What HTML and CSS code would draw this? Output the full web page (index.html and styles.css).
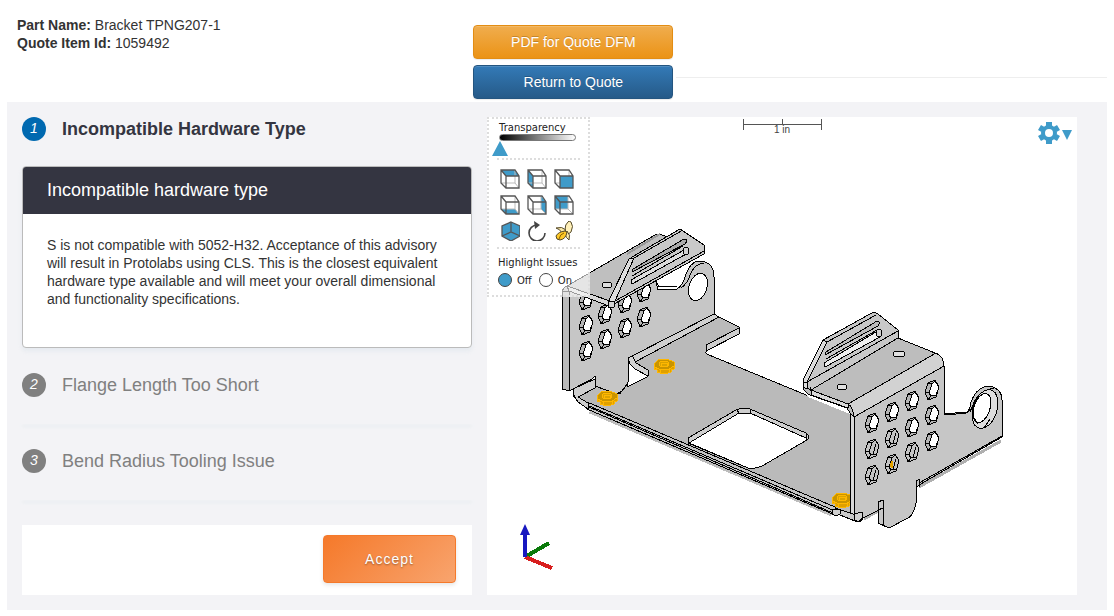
FILE: index.html
```html
<!DOCTYPE html>
<html lang="en">

<head>
  <meta charset="UTF-8">
  <meta name="viewport" content="width=device-width, initial-scale=1.0">
  <title>Bracket TPNG207-1</title>
  <link rel="stylesheet" href="styles.css">
</head>

<body>
  <header class="page-header">
    <div class="part-info">
      <div><strong>Part Name:</strong> Bracket TPNG207-1</div>
      <div><strong>Quote Item Id:</strong> 1059492</div>
    </div>
    <div class="header-actions">
      <div class="action-buttons">
        <button type="button" class="btn btn-warning">PDF for Quote DFM</button>
        <button type="button" class="btn btn-primary">Return to Quote</button>
      </div>
      <hr class="header-rule">
    </div>
  </header>

  <main class="panel">
    <section class="advisories">
      <div class="step active">
        <h2 class="step-title"><i class="step-number">1</i>Incompatible Hardware Type</h2>
        <div class="card">
          <h3 class="card-title">Incompatible hardware type</h3>
          <p class="card-text">S is not compatible with 5052-H32. Acceptance of this advisory will result in Protolabs using CLS. This is the closest equivalent hardware type available and will meet your overall dimensional and functionality specifications.</p>
        </div>
      </div>
      <div class="step">
        <h2 class="step-title"><i class="step-number">2</i>Flange Length Too Short</h2>
        <div class="step-line"></div>
      </div>
      <div class="step">
        <h2 class="step-title"><i class="step-number">3</i>Bend Radius Tooling Issue</h2>
        <div class="step-line"></div>
      </div>
      <div class="accept-bar">
        <button type="button" class="btn-accept">Accept</button>
      </div>
    </section>

    <section class="viewer">
      <svg class="model" viewBox="487 117 590 478" preserveAspectRatio="xMinYMin meet">
        <defs>
          <g id="hex">
            <path d="M-7 2 L-4 -7 L3 -10 L7 -3 L4 7 L-4 10 Z" fill="#b5b5b5" stroke="#000" />
            <path d="M-3 3 L0 -6 L3 -9 L7 -3 L4 5 L-1 6 Z" fill="#fff" stroke="#000" />
            <path d="M-7 2 L-3 3 M-1 6 L-4 10 M-4 -7 L0 -6" fill="none" stroke="#000" />
          </g>
          <g id="hexdark">
            <path d="M-7 2 L-4 -7 L3 -10 L7 -3 L4 7 L-4 10 Z" fill="#c4c4c4" stroke="#000" />
            <path d="M-7 2 L-3 3 L0 -6 L-4 -7 M0 -6 L3 -9 M-3 3 L-1 6 L4 5 M-1 6 L-4 10 M4 -5 L1 5" fill="none" stroke="#000" />
          </g>
          <g id="insert">
            <path d="M-10 -2 L-10 3 L-7 4 L-7 6 Q0 9 7 6 L7 4 L10 3 L10 -2 Z" fill="#dfa000" stroke="#ffb700" />
            <path d="M-10 -2 L-6 -6 L3 -7 L10 -4 L10 0 L5 3 L-5 3 L-10 1 Z" fill="#c99400" stroke="#ffb700" />
            <ellipse cx="0" cy="-2" rx="5" ry="3" fill="#dba300" stroke="#ffb700" />
            <path d="M-3 -3 L3 -3 L3 0 L-2 0 Z M-4 3 V7 M5 3 V7" fill="none" stroke="#ffb700" />
          </g>
        </defs>

        <!-- scale -->
        <path d="M743.5 119 V130 M821.5 119 V130 M782.5 119 V124 M743 124.5 H822" stroke="#555" fill="none" />
        <text class="scale-text" x="782" y="133" text-anchor="middle">1 in</text>

        <g stroke="#000" stroke-width="1" stroke-linejoin="round" shape-rendering="crispEdges">
          <!-- floor -->
          <path d="M590 411 L832 514" stroke="#bdbdbd" stroke-width="5" />
          <path d="M573 388 L593 380 L620 394 L628 357 L633 355 L717 316 L739 327 V334 L707 350 Q704 353 709 355 L850 413 V516 L835 514 L588 409 L578 402 L573 395 Z" fill="#bababa" />
          <path d="M631 356 L714 314 L719 317 L635 362 Z" fill="#d0d0d0" />
          <path d="M739 328 L706 345 V351 L739 334 Z" fill="#cfcfcf" />
          <path d="M587 402 L835 507 V515 L587 409 Z" fill="#c4c4c4" />
          <path d="M587 405 L835 511 M589 407 L833 513" fill="none" />
          <path d="M573 389 L595 379 V388 L578 397 L588 403 V409 L578 402 Q573 396 573 389 Z" fill="#cfcfcf" />

          <!-- relief at the corner -->
          <path d="M628 357 L634 366 L647 374 V377 L627 387 Z" fill="#fff" />
          <path d="M628 357 L632 355 L636 363 L648 370 V376 L635 369 L630 364 Z" fill="#d4d4d4" />

          <!-- floor cutout -->
          <path d="M688 438 L736 410 Q740 408 750 409 L806 433 Q811 436 807 440 L762 466 Q757 469 748 468 L688 443 Z" fill="#cecece" />
          <path d="M689 443 L739 413 H750 L806 438 L807 440 L762 466 Q757 469 748 468 Z" fill="#fff" />
          <path d="M737 410 L739 413 M750 409 V413 M806 433 V438" />

          <!-- left wall -->
          <path d="M569 291 L609 305 L656 281 L658 290 L677 289 Q683 285 685 277 Q690 261 700 261 Q714 262 714 277 V314 L632 356 L628 358 V382 Q621 396 614 393 L595 386 V376 L592 379 L569 391 Z" fill="#c6c6c6" />
          <path d="M562.5 289 L569 291 V391 L562.5 389 Z" fill="#b9b9b9" />
          <path d="M681 288 Q688 283 690 275 Q694 264 704 263 M656 281 L659 287 L677 286" fill="none" />
          <ellipse cx="698" cy="287" rx="9" ry="14" transform="rotate(18 698 287)" fill="#fff" />
          <use href="#hex" x="586" y="300" />
          <use href="#hex" x="586" y="325" />
          <use href="#hex" x="586" y="351" />
          <use href="#hex" x="605" y="314" />
          <use href="#hex" x="605" y="339" />
          <use href="#hex" x="625" y="303" />
          <use href="#hex" x="625" y="328" />
          <use href="#hex" x="644" y="292" />
          <use href="#hex" x="644" y="317" />

          <!-- left flange and slotted tab -->
          <path d="M562.5 292 Q563 287 567 286 L655 235 Q658 233 665 236 L690 250 L616 303 L609 306 L569 291 Z" fill="#bfbfbf" />
          <path d="M567 286 L610 301 L609 306 L569 291 Z" fill="#d8d8d8" />
          <path d="M660 234 L627 254" stroke="#999" stroke-width="2" />
          <ellipse cx="607" cy="285" rx="5" ry="3" fill="#ddd" />
          <path d="M609 300 L629 260 L632 257 L680 229 L704 245 V254 L614 304 L609 306 Z" fill="#c9c9c9" />
          <path d="M609 300 L629 259 L634 258 L615 301 L614 304 L609 304 Z" fill="#dedede" />
          <path d="M634 258 L683 230 M615 301 L704 251" fill="none" />
          <path d="M633 269 L684 239 Q689 239 685 244 L632 272 Z" fill="#aaa" />
          <path d="M632 276 L683 246" fill="none" />
          <path d="M631 280 L684 250 Q690 248 688 253 L632 284 Z" fill="#ddd" />
          <ellipse cx="686" cy="251" rx="3" ry="4" fill="#d0d0d0" />
          <rect x="608" y="301" width="6" height="6" fill="#d0d0d0" />

          <!-- inserts -->
          <use href="#insert" x="664" y="366" />
          <use href="#insert" x="607" y="398" />
          <use href="#insert" x="842" y="500" />

          <!-- right wall -->
          <path d="M864 519 L878 511 M919 487 L1001 441" stroke="#b0b0b0" stroke-width="3" />
          <path d="M854 417 L944 366 V414 L967 412 Q970 410 971 402 Q977 386 990 386 Q1002 389 1002 400 V437 L919 485 L916 488 V503 Q913 516 908 518 L889 528 L878 523 V502 L883 500 V508 L863 518 L854 518 Z" fill="#c6c6c6" />
          <path d="M850 413 L854 417 V517 L850 514 Z" fill="#d8d8d8" />
          <path d="M835 508 L850 513 L862 517 V512 L863 518 Q860 524 855 521 L840 515 Z" fill="#c9c9c9" />
          <path d="M832 509 H840 V514 L836 516 L832 514 Z M854 514 L862 512 V518 L859 522 L855 520 Z" fill="#d0d0d0" />
          <path d="M883 500 V525 L889 528 M878 510 L883 508 M916 482 L919 479 V487 M916 480 V490 M919 483 L1002 436 M944 414 L947 415 L966 413 Q972 411 974 402 Q980 390 994 388" fill="none" />
          <ellipse cx="985" cy="409" rx="12" ry="20" transform="rotate(18 985 409)" fill="#dedede" />
          <ellipse cx="982" cy="408" rx="8" ry="15" transform="rotate(18 982 408)" fill="#fff" />
          <path d="M974 418 L978 424 M990 419 L984 428 M974 404 L970 412" />

          <!-- right flange -->
          <path d="M807 394 L850 410 V414 L808 397 Z" fill="#fff" stroke="none" />
          <path d="M803 387 Q804 392 810 395 L847 408 L850 413 L854 417 L944 366 Q944 357 935 353 L898 338 L808 378 Z" fill="#bdbdbd" />
          <path d="M848 404 L936 353 Q944 357 944 366 L854 417 Q853 407 848 404 Z" fill="#d2d2d2" />
          <path d="M811 390 L848 404 V408 L811 395 Z" fill="#d8d8d8" />
          <path d="M803 380 L823 340 L870 314 Q874 311 878 314 L898 330 V338 L811 390 L803 386 Z" fill="#c8c8c8" />
          <path d="M803 380 L823 340 L827 342 L807 382 V389 L803 387 Z" fill="#dcdcdc" />
          <path d="M827 342 L876 315 M807 382 L898 331 M803 382 L807 383 M810 387 L812 394" fill="none" />
          <path d="M826 352 L877 321 Q881 322 878 326 L825 355 Z" fill="#bbb" />
          <path d="M826 359 L877 330" fill="none" />
          <path d="M824 363 L876 332 Q884 328 880 337 L825 367 Z" fill="#eee" />
          <ellipse cx="879" cy="333" rx="3" ry="4" fill="#d0d0d0" />
          <ellipse cx="899" cy="354" rx="6" ry="3" fill="#e0e0e0" />
          <ellipse cx="842" cy="387" rx="5" ry="3" fill="#e0e0e0" />

          <use href="#hex" x="872" y="423" />
          <use href="#hex" x="892" y="412" />
          <use href="#hex" x="912" y="401" />
          <use href="#hex" x="932" y="390" />
          <use href="#hexdark" x="872" y="449" />
          <use href="#hexdark" x="892" y="438" />
          <use href="#hex" x="912" y="427" />
          <use href="#hex" x="932" y="415" />
          <use href="#hexdark" x="872" y="475" />
          <use href="#hexdark" x="892" y="464" />
          <use href="#hexdark" x="912" y="452" />
          <use href="#hex" x="932" y="441" />
          <path d="M892 461 L890 465 L892 468 Z" fill="#e5a300" stroke="#e5a300" />
        </g>

        <!-- axes -->
        <g stroke-width="4" fill="none" shape-rendering="crispEdges">
          <path d="M525 557 L549 543" stroke="#0a7a0a" />
          <path d="M525 557 L552 568" stroke="#d81e1e" />
          <path d="M525 557 V533" stroke="#1818c0" />
        </g>
        <path d="M525 524 L530 535 H520 Z" fill="#1818c0" />
      </svg>

      <div class="toolbox">
        <label class="tool-label" for="transparency">Transparency</label>
        <input type="range" id="transparency" class="transparency" min="0" max="100" value="0">
        <div class="tool-grid">
          <button type="button" class="tool" aria-label="Top">
            <svg viewBox="0 0 20 20">
              <path class="face" d="M1 1 H15 L19 7 H6 Z" />
              <path class="hidden-edge" d="M15 1 V14 H1 M15 14 L19 19" />
              <path class="edge" d="M1 1 H15 L19 7 V19 H6 L1 14 Z M1 1 L6 7 H19 M6 7 V19" />
            </svg>
          </button>
          <button type="button" class="tool" aria-label="Left">
            <svg viewBox="0 0 20 20">
              <path class="face" d="M1 1 L6 7 V19 L1 14 Z" />
              <path class="hidden-edge" d="M15 1 V14 H1 M15 14 L19 19" />
              <path class="edge" d="M1 1 H15 L19 7 V19 H6 L1 14 Z M1 1 L6 7 H19 M6 7 V19" />
            </svg>
          </button>
          <button type="button" class="tool" aria-label="Front">
            <svg viewBox="0 0 20 20">
              <path class="hidden-edge" d="M15 1 V14 H1 M15 14 L19 19" />
              <path class="face" d="M6 7 H19 V19 H6 Z" />
              <path class="edge" d="M1 1 H15 L19 7 V19 H6 L1 14 Z M1 1 L6 7 H19 M6 7 V19" />
            </svg>
          </button>
          <button type="button" class="tool" aria-label="Bottom">
            <svg viewBox="0 0 20 20">
              <path class="face" d="M1 14 H15 L19 19 H6 Z" />
              <path class="hidden-edge" d="M15 1 V14 H1 M15 14 L19 19" />
              <path class="edge" d="M1 1 H15 L19 7 V19 H6 L1 14 Z M1 1 L6 7 H19 M6 7 V19" />
            </svg>
          </button>
          <button type="button" class="tool" aria-label="Right">
            <svg viewBox="0 0 20 20">
              <path class="face" d="M14 1 L19 7 V19 L14 14 Z" />
              <path class="hidden-edge" d="M14 1 V14 H1 M14 14 L19 19" />
              <path class="edge" d="M1 1 H15 L19 7 V19 H6 L1 14 Z M1 1 L6 7 H19 M6 7 V19" />
            </svg>
          </button>
          <button type="button" class="tool" aria-label="Back">
            <svg viewBox="0 0 20 20">
              <path class="face" d="M1 1 H14 V14 H1 Z" />
              <path class="hidden-edge" d="M14 1 V14 H1 M14 14 L19 19" />
              <path class="edge" d="M1 1 H15 L19 7 V19 H6 L1 14 Z M1 1 L6 7 H19 M6 7 V19" />
            </svg>
          </button>
          <button type="button" class="tool" aria-label="Isometric">
            <svg viewBox="0 0 20 20">
              <path class="face" d="M11 1 L20 5 V15 L11 20 L2 15 V5 Z" />
              <path class="edge" d="M11 1 L20 5 V15 L11 20 L2 15 V5 Z M11 1 V11 M2 15 L11 11 L20 15" />
            </svg>
          </button>
          <button type="button" class="tool" aria-label="Rotate">
            <svg viewBox="0 0 20 20">
              <path d="M18 12 A8 8 0 1 1 10 4" fill="none" stroke="#444" stroke-width="1.600" />
              <path d="M7 0 L13 4 L8 8 Z" fill="#444" />
            </svg>
          </button>
          <button type="button" class="tool" aria-label="Banana for scale">
            <svg viewBox="0 0 20 20">
              <path d="M11 9 Q11 3 14 1 L15 0 L17 1 Q20 5 17 11 L13 14 Z" fill="#fff0b8" stroke="#554a2a" />
              <path d="M12 9 Q8 5 2 7 Q6 8 8 12 Z M13 10 Q17 14 15 19 Q12 17 11 13 Z" fill="#fbe9a8" stroke="#554a2a" />
              <path d="M11 10 Q4 11 2 15 Q2 19 6 19 Q12 18 13 11 Z" fill="#ffc928" stroke="#554a2a" />
              <path d="M10 12 Q6 13 5 18" fill="none" stroke="#8a6200" />
            </svg>
          </button>
        </div>
        <fieldset class="highlight">
          <legend class="tool-label">Highlight Issues</legend>
          <div class="radios">
            <input type="radio" name="highlight" id="highlight-off" checked>
            <label for="highlight-off">Off</label>
            <input type="radio" name="highlight" id="highlight-on">
            <label for="highlight-on">On</label>
          </div>
        </fieldset>
      </div>

      <button type="button" class="settings" aria-label="Settings">
        <svg width="34" height="22" viewBox="0 0 34 22">
          <g stroke="#3f9bc9" fill="none">
            <circle cx="11" cy="11" r="6" stroke-width="4" />
            <path d="M11 0 V4 M11 18 V22 M1.500 5.500 L5 7.500 M17 14.500 L20.500 16.500 M1.500 16.500 L5 14.500 M17 7.500 L20.500 5.500" stroke-width="6" />
          </g>
          <path d="M24 8 H34 L29 18 Z" />
        </svg>
      </button>
    </section>
  </main>
</body>

</html>
```
FILE: styles.css
```css
* {
  box-sizing: border-box;
}

body {
  margin: 0;
  padding: 0 7px;
  background-color: #fff;
  color: #333;
  font-family: "Liberation Sans", Arial, sans-serif;
  font-size: 14px;
  line-height: 18px;
}

h2,
h3,
p {
  margin: 0;
}

button {
  font-family: inherit;
  cursor: pointer;
}

/* header */

.page-header {
  display: grid;
  grid-template-columns: 5fr 7fr;
}

.part-info {
  padding: 16px 10px 0;
}

.header-actions {
  display: flex;
  padding: 25px 0 3px 8px;
}

.action-buttons {
  display: flex;
  flex-direction: column;
  gap: 6px;
  width: 200px;
}

.header-rule {
  flex: 1;
  margin: 52px 0 0 3px;
  border: 0;
  border-top: 1px solid #eee;
}

.btn {
  height: 34px;
  border: 1px solid;
  border-radius: 4px;
  color: #fff;
  font-size: 14px;
  text-shadow: 0 -1px 0 rgba(0, 0, 0, 0.2);
  box-shadow: inset 0 1px 0 rgba(255, 255, 255, 0.15), 0 1px 1px rgba(0, 0, 0, 0.08);
}

.btn-warning {
  background-image: linear-gradient(#f0ad4e, #eb9316);
  border-color: #e38d13;
}

.btn-primary {
  background-image: linear-gradient(#337ab7, #265a88);
  border-color: #245580;
}

/* main panel */

.panel {
  display: grid;
  grid-template-columns: minmax(0, 450px) 1fr;
  gap: 15px;
  padding: 15px 30px 15px 15px;
  background-color: #f3f3f6;
}

.step {
  margin-bottom: 25px;
}

.step-title {
  display: flex;
  align-items: center;
  gap: 16px;
  margin-bottom: 25px;
  color: #808080;
  font-size: 18px;
  font-weight: normal;
  line-height: 24px;
}

.step-number {
  width: 24px;
  height: 24px;
  border-radius: 50%;
  background-color: #808080;
  color: #fff;
  font-size: 14px;
  line-height: 22px;
  text-align: center;
}

.active .step-title {
  color: #343541;
  font-weight: bold;
}

.active .step-number {
  background-color: #0069b0;
  font-weight: normal;
}

.step-line {
  height: 2px;
  box-shadow: 0 3px 3px rgba(200, 220, 225, 0.2);
}

.card {
  min-height: 182px;
  border: 1px solid #bbb;
  border-radius: 4px;
  background-color: #fff;
  box-shadow: 0 3px 4px rgba(200, 215, 225, 0.3);
  overflow: hidden;
}

.card-title {
  padding: 0 24px;
  background-color: #343541;
  color: #fff;
  font-size: 18px;
  font-weight: normal;
  line-height: 47px;
}

.card-text {
  padding: 22px 24px;
}

.accept-bar {
  display: flex;
  justify-content: flex-end;
  padding: 10px 16px 12px;
  background-color: #fff;
}

.btn-accept {
  width: 133px;
  height: 48px;
  border: 1px solid #f5792a;
  border-radius: 4px;
  background-image: linear-gradient(135deg, #f5792a, #f8a46e);
  color: #fff;
  font-size: 14px;
  letter-spacing: 1px;
  text-shadow: 0 1px 2px rgba(0, 0, 0, 0.4);
  box-shadow: 0 2px 4px rgba(0, 0, 0, 0.1);
}

/* 3d viewer */

.viewer {
  position: relative;
  background-color: #fff;
}

.model {
  display: block;
  width: 100%;
}

.scale-text {
  fill: #444;
  font-family: "Liberation Sans", Arial, sans-serif;
  font-size: 10px;
}

.toolbox {
  position: absolute;
  top: 0;
  left: 0;
  width: 103px;
  padding: 3px 8px 8px;
  border: 2px dotted #ddd;
  background-color: rgba(255, 255, 255, 0.6);
  color: #222;
  font-family: "DejaVu Sans", Verdana, sans-serif;
  font-size: 10px;
  line-height: 12px;
}

.tool-label {
  display: block;
  padding: 0 0 0 2px;
}

.transparency {
  display: block;
  appearance: none;
  width: 77px;
  height: 7px;
  margin: 0 0 17px 2px;
  background: none;
}

.transparency::-webkit-slider-runnable-track {
  height: 7px;
  border: 1px solid #777;
  border-radius: 4px;
  background-image: linear-gradient(to right, #000, #fff);
}

.transparency::-webkit-slider-thumb {
  appearance: none;
  width: 16px;
  height: 15px;
  margin: 6px 0 0 -8px;
  background-color: #3f9bc9;
  clip-path: polygon(50% 0, 100% 100%, 0 100%);
}

.tool-grid {
  display: grid;
  grid-template-columns: repeat(3, 20px);
  gap: 6px 7px;
  padding: 9px 3px 6px;
  border-top: 2px dotted #ddd;
  border-bottom: 2px dotted #ddd;
}

.tool {
  height: 20px;
  padding: 0;
  border: 0;
  background: none;
}

.tool svg {
  display: block;
}

.face {
  fill: #3f9bc9;
}

.edge {
  fill: none;
  stroke: #555;
  stroke-width: 1.3;
}

.hidden-edge {
  fill: none;
  stroke: #bbb;
}

.highlight {
  margin: 0;
  padding: 0;
  border: 0;
}

.highlight .tool-label {
  padding: 8px 0 4px 1px;
}

.radios {
  display: flex;
  align-items: center;
  gap: 5px;
  padding-left: 1px;
}

.radios input {
  appearance: none;
  flex: none;
  width: 14px;
  height: 14px;
  margin: 0;
  border: 1px solid #444;
  border-radius: 50%;
  background-color: #fff;
}

.radios input:checked {
  background-color: #3f9bc9;
}

.radios label {
  padding-top: 2px;
}

.radios label:first-of-type {
  margin-right: 2px;
}

.settings {
  position: absolute;
  top: 5px;
  right: 5px;
  padding: 0;
  border: 0;
  background: none;
  fill: #3f9bc9;
}

.settings svg {
  display: block;
}
```
